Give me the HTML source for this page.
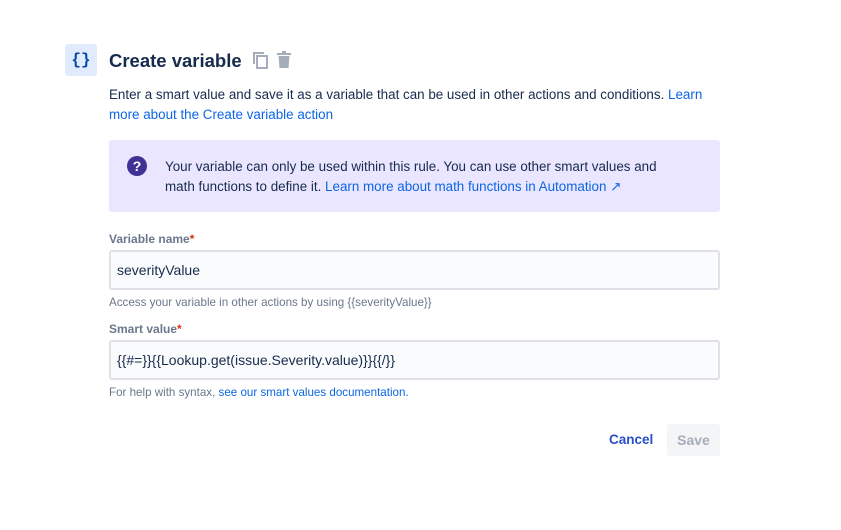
<!DOCTYPE html><html><head><style>
body{margin:0;width:841px;height:530px;background:#fff;font-family:"Liberation Sans",sans-serif;position:relative;overflow:hidden}
.a{position:absolute}
.t{font-size:13.4px;color:#172b4d;line-height:20px}
a{color:#0c66e4;text-decoration:none}
.in{position:absolute;left:109px;width:601px;height:36px;border:2px solid #dfe1e6;background:#fafbfc;border-radius:3px;font-size:14px;color:#172b4d;line-height:36px;padding-left:6px}
.lbl{font-size:12px;font-weight:bold;color:#6b778c}
.lbl span{color:#de350b}
.help{font-size:11.6px;color:#6b778c}
</style></head><body>
<div class="a" style="left:65px;top:44px;width:32px;height:32px;background:#e0ebfd;border-radius:3px;color:#0747a6;font:bold 16px 'Liberation Mono',monospace;text-align:center;line-height:32px">{}</div>
<div class="a" style="left:109px;top:50px;font-size:18.5px;font-weight:bold;color:#172b4d">Create variable</div>
<svg class="a" style="left:252px;top:51px" width="18" height="18" viewBox="0 0 18 18"><rect x="5" y="5" width="10" height="12" fill="none" stroke="#a5adba" stroke-width="2"/><path d="M2 13V2h10" fill="none" stroke="#a5adba" stroke-width="2"/></svg>
<svg class="a" style="left:276px;top:51px" width="16" height="18" viewBox="0 0 16 18"><rect x="1" y="2" width="14" height="2" fill="#a5adba"/><rect x="6" y="0" width="4" height="2" fill="#a5adba"/><path d="M2.5 5h11l-1 12h-9z" fill="#a5adba"/></svg>
<div class="a t" style="left:109px;top:85px;width:615px">Enter a smart value and save it as a variable that can be used in other actions and conditions. <a>Learn more about the Create variable action</a></div>
<div class="a" style="left:109px;top:140px;width:611px;height:72px;background:#eae6ff;border-radius:3px"></div>
<div class="a" style="left:127px;top:156px;width:20px;height:20px;border-radius:50%;background:#403294;color:#fff;font-weight:bold;font-size:14px;text-align:center;line-height:20px">?</div>
<div class="a t" style="left:165px;top:157px;width:520px">Your variable can only be used within this rule. You can use other smart values and math functions to define it. <a>Learn more about math functions in Automation ↗</a></div>
<div class="a lbl" style="left:109px;top:232px">Variable name<span>*</span></div>
<div class="in" style="top:250px">severityValue</div>
<div class="a help" style="left:109px;top:296px">Access your variable in other actions by using {{severityValue}}</div>
<div class="a lbl" style="left:109px;top:322px">Smart value<span>*</span></div>
<div class="in" style="top:340px">{{#=}}{{Lookup.get(issue.Severity.value)}}{{/}}</div>
<div class="a help" style="left:109px;top:386px">For help with syntax, <a>see our smart values documentation.</a></div>
<div class="a" style="left:609px;top:432px;font-size:13.5px;font-weight:bold;color:#2a4fc4">Cancel</div>
<div class="a" style="left:667px;top:424px;width:53px;height:32px;background:#f4f5f7;border-radius:3px;color:#a5adba;font-size:14px;font-weight:bold;text-align:center;line-height:32px">Save</div>
</body></html>
